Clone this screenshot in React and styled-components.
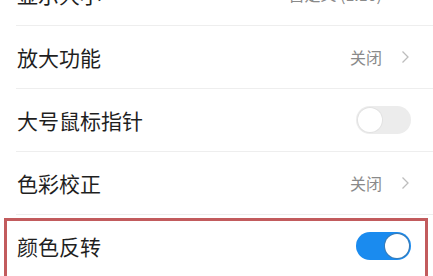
import React from 'react'
import styled, { createGlobalStyle } from 'styled-components'

const GlobalStyle = createGlobalStyle`
  html, body {
    margin: 0;
    padding: 0;
    background: #ffffff;
    overflow: hidden;
  }
  body {
    font-family: "Noto Sans CJK SC", "Noto Sans", sans-serif;
  }
`

const Page = styled.div`
  width: 433px;
  height: 276px;
  overflow: hidden;
  background: #ffffff;
`

// first row is scrolled partly off the top
const List = styled.div`
  display: flex;
  flex-direction: column;
  margin-top: -37px;
`

const Row = styled.div`
  position: relative;
  height: 62px;
  display: flex;
  align-items: center;
  justify-content: space-between;
  padding: 0 23px 0 17px;
`

const Divider = styled.div`
  height: 1px;
  margin-left: 16px;
  background: #eeeeee;
`

const Label = styled.span`
  font-size: 21px;
  color: #1f1f1f;
  line-height: 1;
`

const Right = styled.div`
  display: flex;
  align-items: center;
  gap: 19px;
`

const Value = styled.span`
  font-size: 16px;
  color: #8a8a8a;
  line-height: 1;
`

const Track = styled.div`
  width: 55px;
  height: 28px;
  border-radius: 14px;
  box-sizing: border-box;
  background: ${p => (p.$on ? '#1a8bef' : '#ececec')};
  display: flex;
  align-items: center;
  justify-content: ${p => (p.$on ? 'flex-end' : 'flex-start')};
  padding: 2px;
  margin-right: -1px;
`

const Knob = styled.div`
  width: 24px;
  height: 24px;
  border-radius: 50%;
  background: #ffffff;
  box-shadow: 0 0 0 1px ${p => (p.$on ? '#3a7bb5' : '#e2e2e2')};
`

// red annotation frame drawn over the row
const Highlight = styled.div`
  position: absolute;
  left: 4px;
  right: 5px;
  top: 3px;
  bottom: -6px;
  border: 3px solid #c25b5d;
  pointer-events: none;
`

function Chevron() {
  return (
    <svg width="9" height="14" viewBox="0 0 9 14">
      <path d="M1.5 1.5 L7 7 L1.5 12.5" fill="none" stroke="#bdbdbd" strokeWidth="1.3" />
    </svg>
  )
}

function Toggle({ on }) {
  return (
    <Track $on={on}>
      <Knob $on={on} />
    </Track>
  )
}

const rows = [
  { label: '显示大小', value: '自定义 (1.10)' },
  { label: '放大功能', value: '关闭' },
  { label: '大号鼠标指针', toggle: false },
  { label: '色彩校正', value: '关闭' },
  { label: '颜色反转', toggle: true, highlight: true },
]

export default function App() {
  return (
    <Page>
      <GlobalStyle />
      <List>
        {rows.map((r, i) => (
          <React.Fragment key={r.label}>
            <Row>
              <Label>{r.label}</Label>
              {r.value !== undefined ? (
                <Right>
                  <Value>{r.value}</Value>
                  <Chevron />
                </Right>
              ) : (
                <Toggle on={r.toggle} />
              )}
              {r.highlight && <Highlight />}
            </Row>
            {i < rows.length - 1 && <Divider />}
          </React.Fragment>
        ))}
      </List>
    </Page>
  )
}
